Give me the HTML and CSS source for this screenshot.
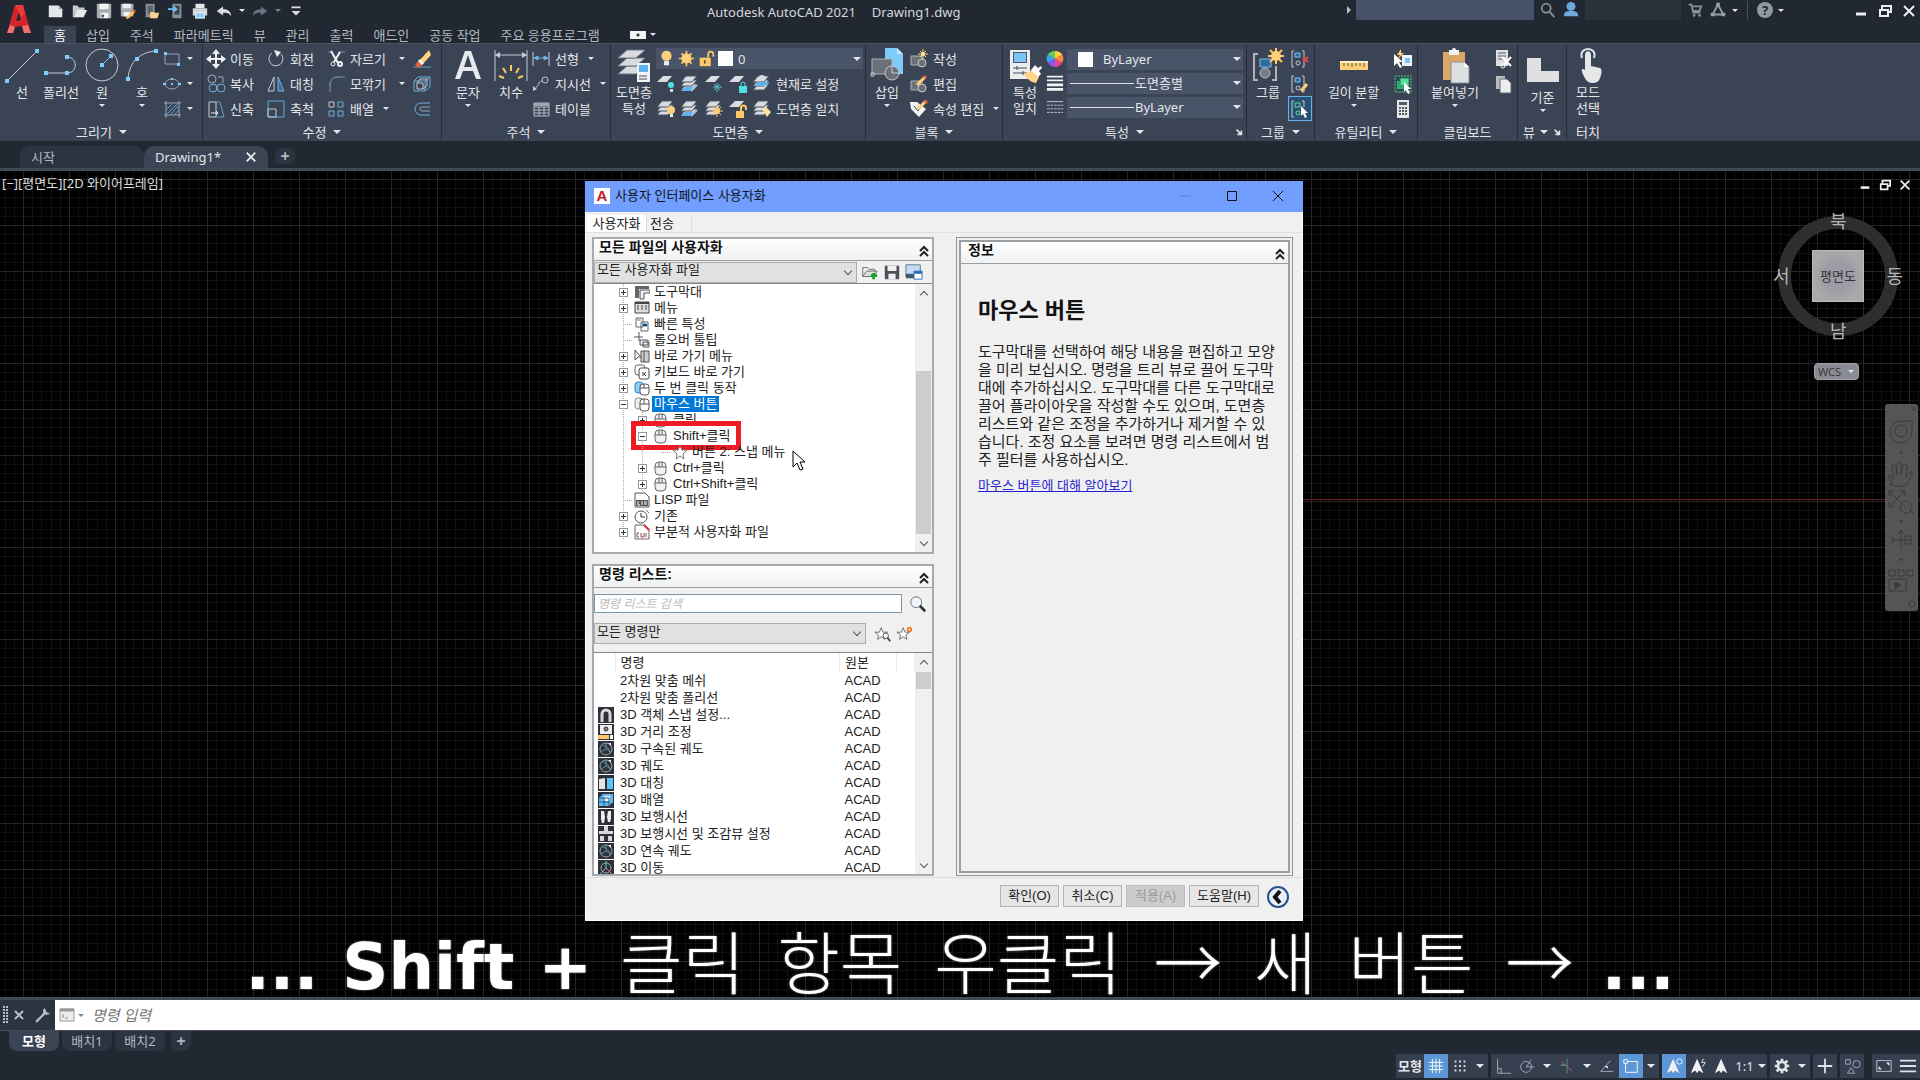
FILE: index.html
```html
<!DOCTYPE html>
<html lang="ko">
<head>
    <meta charset="UTF-8">
    <title>Autodesk AutoCAD 2021 - Drawing1.dwg</title>
    <link rel="stylesheet" href="styles.css">
</head>
<body>
<svg class="defs" aria-hidden="true">
    <!-- quick access -->
    <symbol id="q-new" viewBox="0 0 20 20"><path d="M2 4h11l4 4v9H2z" fill="#e4e6e8"/><path d="M13 4v4h4z" fill="#9aa2ac"/></symbol>
    <symbol id="q-open" viewBox="0 0 20 20"><path d="M2 4h5l2 2h6v3H6l-3 8H2z" fill="#c6cace"/><path d="M6 9h12l-4 8H3z" fill="#e8eaec"/></symbol>
    <symbol id="q-save" viewBox="0 0 20 20"><path d="M2 2h16v16H2z" fill="#a9adb2"/><path d="M5 2h10v6H5zM6 12h9v6H6z" fill="#f2f2f2"/><path d="M7 14h3v3H7z" fill="#555c66"/></symbol>
    <symbol id="q-saveas" viewBox="0 0 20 20"><path d="M2 2h14v14H2z" fill="#a9adb2"/><path d="M4 2h9v5H4zM5 11h7v5H5z" fill="#f2f2f2"/><path d="M8 17l8-8 2 2-7 7-3 1z" fill="#ffc861"/><path d="M15 10l2-2 2 2-2 2z" fill="#d65a3a"/></symbol>
    <symbol id="q-mopen" viewBox="0 0 20 20"><path d="M3 2h10v15H3z" fill="#8b9097"/><path d="M5 4h6v9H5z" fill="#5c636d"/><path d="M8 11h4l1 1h5l-2 6H8z" fill="#ffd489"/></symbol>
    <symbol id="q-msave" viewBox="0 0 20 20"><path d="M6 2h10v16H6z" fill="#8b9097"/><path d="M8 4h6v10H8z" fill="#3d4654"/><path d="M1 7h6V4l5 4-5 4V9H1z" fill="#6cc0f5"/></symbol>
    <symbol id="q-print" viewBox="0 0 20 20"><path d="M5 2h10v5H5z" fill="#e6e6e6"/><path d="M2 7h16v8H2z" fill="#d3d6d9"/><path d="M5 12h10v6H5z" fill="#8fd0fa" stroke="#f4f4f4"/></symbol>
    <symbol id="q-undo" viewBox="0 0 20 20"><path d="M2 10l7-5v3c6 0 9 3 9 8-2-4-5-4-9-4v3z" fill="#dcdfe3"/></symbol>
    <symbol id="q-redo" viewBox="0 0 20 20"><path d="M18 10l-7-5v3c-6 0-9 3-9 8 2-4 5-4 9-4v3z" fill="#6b7380"/></symbol>
    <symbol id="q-more" viewBox="0 0 20 20"><path d="M5 5h10v2H5zM5 10h10l-5 5z" fill="#dcdfe3"/></symbol>
    <symbol id="logo" viewBox="0 0 28 32"><path d="M2 30L10 2h8l8 28h-7l-2-7-7 1-2 6z" fill="#d3232b"/><path d="M10 2h8l2 8-9 9 3-10z" fill="#ee3a3d"/><path d="M2 30l3-8 5 2-2 6zM26 30l-3-8-6 1 2 7z" fill="#f0706e"/><path d="M11 18l3-9 2 8z" fill="#212832"/></symbol>
    <symbol id="t-search" viewBox="0 0 20 20"><circle cx="8" cy="8" r="5" fill="none" stroke="#8a9099" stroke-width="2"/><path d="M12 12l5 6" stroke="#8a9099" stroke-width="2"/></symbol>
    <symbol id="t-user" viewBox="0 0 20 20"><circle cx="10" cy="6" r="5" fill="#69a9dc"/><path d="M2 17c0-6 4-6 8-6s8 0 8 6z" fill="#69a9dc"/></symbol>
    <symbol id="t-cart" viewBox="0 0 20 20"><path d="M3 4h3l2 9h8M6 6h11l-2 5H8" fill="none" stroke="#8a9099" stroke-width="2"/><circle cx="9" cy="16" r="1.500" fill="#8a9099"/><circle cx="15" cy="16" r="1.500" fill="#8a9099"/></symbol>
    <symbol id="t-app" viewBox="0 0 20 20"><path d="M10 4l6 11H4z" fill="none" stroke="#9aa0a8" stroke-width="2"/><path d="M8 2h4v4H8zM2 13h4v4H2zM14 13h4v4h-4z" fill="#9aa0a8"/></symbol>
    <!-- draw -->
    <symbol id="b-line" viewBox="0 0 36 36"><path d="M3 33L33 3" stroke="#c5ccd6" fill="none"/><path d="M1 31h4v4H1zM31 1h4v4h-4z" fill="#7ecbff"/></symbol>
    <symbol id="b-pline" viewBox="0 0 36 36"><path d="M3 25h21c11 0 11-16 0-16" stroke="#c5ccd6" fill="none"/><path d="M1 23h4v4H1zM22 23h4v4h-4zM22 7h4v4h-4z" fill="#7ecbff"/></symbol>
    <symbol id="b-circle" viewBox="0 0 36 36"><circle cx="18" cy="17" r="16" stroke="#c5ccd6" fill="none"/><path d="M18 17l8-8" stroke="#7ecbff"/><path d="M16 15h4v4h-4zM25 6h4v4h-4z" fill="#7ecbff"/></symbol>
    <symbol id="b-arc" viewBox="0 0 36 36"><path d="M4 31C5 14 16 4 32 3" stroke="#c5ccd6" fill="none"/><path d="M2 29h4v4H2zM11 9h4v4h-4zM30 1h4v4h-4z" fill="#7ecbff"/></symbol>
    <symbol id="s-rect" viewBox="0 0 20 20"><path d="M3 5h14v10H3z" stroke="#9aa5b5" fill="none"/><path d="M2 3h3v3H2zM15 14h3v3h-3z" fill="#7ecbff"/></symbol>
    <symbol id="s-ellipse" viewBox="0 0 20 20"><ellipse cx="10" cy="10" rx="7" ry="5" stroke="#9aa5b5" fill="none"/><path d="M9 9h2v2H9zM9 4h2v2H9zM16 9h3v2h-3zM1 9h3v2H1z" fill="#7ecbff"/></symbol>
    <symbol id="s-hatch" viewBox="0 0 20 20"><path d="M2 4h17M2 16h17M4 2v17M17 2v17" stroke="#9aa5b5" fill="none"/><path d="M5 10l5-5M5 15L15 5M8 16l8-9M12 16l5-5" stroke="#5f9fd0"/></symbol>
    <!-- modify -->
    <symbol id="s-move" viewBox="0 0 20 20"><path d="M10 2v16M2 10h16" stroke="#eef0f3" stroke-width="2"/><path d="M10 0l4 5H6zM10 20l4-5H6zM0 10l5-4v8zM20 10l-5-4v8z" fill="#eef0f3"/></symbol>
    <symbol id="s-rotate" viewBox="0 0 20 20"><path d="M6 4a7 7 0 1 0 9 1" stroke="#c5ccd6" fill="none"/><path d="M8 1l7 2-4 5z" fill="#eef0f3"/></symbol>
    <symbol id="s-trim" viewBox="0 0 20 20"><path d="M2 3h5M12 3h7" stroke="#7f8b9b"/><path d="M5 2l7 12M14 3L8 13" stroke="#eef0f3" stroke-width="2"/><circle cx="7" cy="15" r="2" stroke="#eef0f3" fill="none"/><circle cx="14" cy="15" r="2" stroke="#eef0f3" fill="none" stroke-width="2"/></symbol>
    <symbol id="s-erase" viewBox="0 0 20 20"><path d="M1 18h18" stroke="#5f9fd0"/><path d="M6 13L17 1l2 5-9 10z" fill="#ffd27c"/><path d="M6 12l4 4-3 3-4-3z" fill="#e5643f"/><path d="M8 10l4 4-2 2-4-4z" fill="#f4f4f4"/></symbol>
    <symbol id="s-copy" viewBox="0 0 20 20"><g fill="none" stroke="#9aa5b5"><circle cx="6" cy="5" r="4"/><path d="M12 3h5v6"/></g><circle cx="7" cy="14" r="4" fill="none" stroke="#6fb0df"/><circle cx="15" cy="14" r="4" fill="none" stroke="#6fb0df"/></symbol>
    <symbol id="s-mirror" viewBox="0 0 20 20"><path d="M8 3v14H2z" fill="none" stroke="#c5ccd6"/><path d="M12 3v14h6z" fill="#3f6f99" stroke="#6fb0df"/></symbol>
    <symbol id="s-fillet" viewBox="0 0 20 20"><path d="M4 18V10M11 3h8" stroke="#8793a3"/><path d="M4 11c0-5 3-8 8-8" stroke="#6fb0df" fill="none"/></symbol>
    <symbol id="s-explode" viewBox="0 0 20 20"><path d="M2 7h11v10H2zM2 7l4-4h12l-5 4M18 3v10l-5 4" stroke="#6fb0df" fill="none"/><path d="M5 9h6v6H5zM5 9l3-4h7v7l-4 3" fill="none" stroke="#c5ccd6"/></symbol>
    <symbol id="s-stretch" viewBox="0 0 20 20"><path d="M3 3h7v15H3z" stroke="#c5ccd6" fill="none"/><path d="M10 3h4l4 15h-8" stroke="#5f9fd0" fill="none"/><path d="M5 14h7l-2-2m2 2l-2 2" stroke="#eef0f3" fill="none"/></symbol>
    <symbol id="s-scale" viewBox="0 0 20 20"><path d="M2 2h16v16H2z" stroke="#5fa8df" fill="none"/><path d="M2 10h8v8H2z" stroke="#c5ccd6" fill="none"/></symbol>
    <symbol id="s-array" viewBox="0 0 20 20"><path d="M3 3h5v5H3z" stroke="#c5ccd6" fill="none"/><path d="M12 3h5v5h-5zM3 12h5v5H3zM12 12h5v5h-5z" stroke="#6fb0df" fill="none"/></symbol>
    <symbol id="s-offset" viewBox="0 0 20 20"><path d="M18 4H9a6 6 0 0 0 0 12h9" stroke="#6fb0df" fill="none"/><path d="M18 8h-8a2 2 0 0 0 0 4h8" stroke="#9aa5b5" fill="none"/></symbol>
    <!-- annotation -->
    <symbol id="b-text" viewBox="0 0 36 36"><path d="M5 31L15 3h6l10 28h-5l-3-8H13l-3 8zM14 19h8L18 7z" fill="#e6e9ee"/></symbol>
    <symbol id="b-dim" viewBox="0 0 36 36"><path d="M2 2v31M34 2v31M2 7h32" stroke="#c5ccd6"/><path d="M2 7l5-3v6zM34 7l-5-3v6z" fill="#c5ccd6"/><path d="M18 17v6M10 20l3 5M26 20l-3 5M6 28l5 2M30 28l-5 2" stroke="#ffc861" stroke-width="2"/></symbol>
    <symbol id="s-linear" viewBox="0 0 20 20"><path d="M2 3v14M18 3v14" stroke="#c5ccd6"/><path d="M3 9h14M3 9l4-2v4zM17 9l-4-2v4z" stroke="#6fb0df" fill="#6fb0df"/></symbol>
    <symbol id="s-leader" viewBox="0 0 20 20"><circle cx="14" cy="6" r="3" stroke="#c5ccd6" fill="none"/><path d="M11 7c-4 0-3 6-8 8" stroke="#c5ccd6" fill="none"/><path d="M2 17v-5l4 3z" fill="#c5ccd6"/></symbol>
    <symbol id="s-table" viewBox="0 0 20 20"><path d="M3 4h15v13H3zM3 8h15M3 11h15M3 14h15M8 8v9M13 8v9" stroke="#b5bcc7" fill="none"/><path d="M3 4h15v3H3z" fill="#9aa5b5"/></symbol>
    <!-- layers -->
    <symbol id="b-layer" viewBox="0 0 36 36"><g fill="#d9dbde" stroke="#6e7580"><path d="M11 18h18l-9 8H2z"/><path d="M11 10h18l-9 8H2z"/><path d="M11 2h18l-9 8H2z"/></g><path d="M21 15h13v19H21z" fill="#f2f3f4"/><path d="M23 17h9v7h-9z" fill="#5bb5f2"/><path d="M23 28h8M23 31h8" stroke="#444b55"/></symbol>
    <symbol id="s-bulb" viewBox="0 0 20 20"><circle cx="10" cy="7" r="6" fill="#ffd07a"/><path d="M7 13h6v5H7z" fill="#e8eaec"/></symbol>
    <symbol id="s-sun" viewBox="0 0 20 20"><path d="M10 1v18M1 10h18M4 4l12 12M16 4L4 16" stroke="#ffc765" stroke-width="2"/><circle cx="10" cy="10" r="6" fill="#ffd07a"/></symbol>
    <symbol id="s-lock" viewBox="0 0 20 20"><path d="M2 9h13v10H2z" fill="#ffc765"/><path d="M12 9V5a3 3 0 0 1 6 0v3" stroke="#ffc765" stroke-width="2" fill="none"/><path d="M8 12v4" stroke="#4c5567" stroke-width="2"/></symbol>
    <symbol id="s-sheet" viewBox="0 0 20 20"><path d="M7 2h9l-5 6H1z" fill="#d9dbde"/></symbol>
    <symbol id="s-sheets" viewBox="0 0 20 20"><g fill="#d9dbde" stroke="#4d5665"><path d="M6 10h11l-5 6H1z"/><path d="M6 6h11l-5 6H1z"/><path d="M6 2h11l-5 6H1z"/></g></symbol>
    <symbol id="l-off" viewBox="0 0 20 20"><use href="#s-sheet"/><circle cx="15" cy="11" r="3" fill="#4fe0e6"/><path d="M14 15h3v3h-3z" fill="#d9dbde"/></symbol>
    <symbol id="l-iso" viewBox="0 0 20 20"><use href="#s-sheets"/><path d="M5 13h8l-3 4H1z" fill="#5fb2ee"/><path d="M11 17l6-6" stroke="#9fc3df" stroke-width="2"/></symbol>
    <symbol id="l-freeze" viewBox="0 0 20 20"><use href="#s-sheet"/><path d="M13 9v9M9 13h9M10 10l6 6M16 10l-6 6" stroke="#4fc0c6"/></symbol>
    <symbol id="l-lock" viewBox="0 0 20 20"><use href="#s-sheet"/><path d="M11 12h8v7h-8z" fill="#4fe0e6"/><path d="M13 12v-2a2 2 0 0 1 4 0v2" stroke="#4fe0e6" fill="none"/></symbol>
    <symbol id="l-cur" viewBox="0 0 20 20"><use href="#s-sheets"/><path d="M6 8h12l-5 4H2z" fill="#5fb2ee"/><circle cx="10" cy="4" r="3" fill="#d8dbe0"/></symbol>
    <symbol id="l-on" viewBox="0 0 20 20"><use href="#s-sheets"/><circle cx="15" cy="11" r="4" fill="#ffd07a"/><path d="M14 15h3v3h-3z" fill="#e8eaec"/></symbol>
    <symbol id="l-thaw" viewBox="0 0 20 20"><use href="#s-sheets"/><path d="M13 7v11M8 12h11M9 8l8 8M17 8l-8 8" stroke="#ffc765"/><circle cx="13" cy="12" r="3" fill="#ffd07a"/></symbol>
    <symbol id="l-unlock" viewBox="0 0 20 20"><use href="#s-sheet"/><path d="M8 12h8v7H8z" fill="#ffc765"/><path d="M13 12V9a2 2 0 0 1 5 0v2" stroke="#ffc765" fill="none" stroke-width="2"/></symbol>
    <symbol id="l-match" viewBox="0 0 20 20"><use href="#s-sheets"/><path d="M10 10l4-2 5 5-4 5z" fill="#ffe0a3"/></symbol>
    <!-- block -->
    <symbol id="b-insert" viewBox="0 0 36 36"><path d="M16 0h12l6 6v20H16z" fill="#7ccbf9"/><path d="M28 0v6h6z" fill="#c7e9fd"/><path d="M3 11h20v15H3z" fill="#6b7078" stroke="#aeb3ba"/><circle cx="23" cy="25" r="7" fill="#6b7078" stroke="#c5cad0"/><path d="M23 18v7h7M2 25h3v3H2z" stroke="#c5cad0" fill="none"/></symbol>
    <symbol id="s-blk" viewBox="0 0 20 20"><path d="M2 7h11v9H2z" fill="#6b7078" stroke="#aeb3ba"/><circle cx="13" cy="14" r="4" fill="#6b7078" stroke="#c5cad0"/></symbol>
    <symbol id="k-new" viewBox="0 0 20 20"><use href="#s-blk"/><path d="M14 0v10M9 5h10M11 2l6 6M17 2l-6 6" stroke="#ffd07a"/><circle cx="14" cy="5" r="2" fill="#ffe3a8"/></symbol>
    <symbol id="k-edit" viewBox="0 0 20 20"><use href="#s-blk"/><path d="M8 11l8-8" stroke="#ffd07a" stroke-width="3"/><path d="M15 4l2-2" stroke="#e5643f" stroke-width="3"/></symbol>
    <symbol id="k-attr" viewBox="0 0 20 20"><path d="M1 3h7l9 7-7 8-8-8z" fill="#f2f3f4"/><path d="M5 7l4 5 3-4" stroke="#444b55" fill="none"/><path d="M9 10l8-8" stroke="#ffd07a" stroke-width="3"/><path d="M16 4l2-2" stroke="#e5643f" stroke-width="3"/></symbol>
    <!-- properties -->
    <symbol id="b-match" viewBox="0 0 36 36"><path d="M3 2h20v29H3z" fill="#eceded"/><path d="M6 4h14v11H6z" fill="#4c5567"/><path d="M7 5h12v9H7z" fill="#7cc4f5"/><path d="M6 20h14M6 25h14M10 18v4M16 23v4" stroke="#444b55"/><path d="M17 26l8-4 7 7-3 6c-4 0-9-4-12-9z" fill="#ffd489"/><path d="M24 22l4-5 3 3 3-2 1 2-3 3 2 3-3 3z" fill="#fff"/></symbol>
    <symbol id="s-wheel" viewBox="0 0 20 20"><path d="M10 10V1a9 9 0 0 1 8 4z" fill="#ffd23c"/><path d="M10 10l8-5a9 9 0 0 1 0 9z" fill="#ff8a3c"/><path d="M10 10l8 4a9 9 0 0 1-8 5z" fill="#e8478f"/><path d="M10 10v9a9 9 0 0 1-8-5z" fill="#8a56e8"/><path d="M10 10l-8 4a9 9 0 0 1 0-9z" fill="#39a5ef"/><path d="M10 10L2 5a9 9 0 0 1 8-4z" fill="#5fcf5a"/></symbol>
    <symbol id="s-weight" viewBox="0 0 20 20"><path d="M1 3h18M1 7h18" stroke="#f2f3f4" stroke-width="2"/><path d="M1 12h18M1 17h18" stroke="#f2f3f4" stroke-width="3"/></symbol>
    <symbol id="s-ltype" viewBox="0 0 20 20"><path d="M1 4h18" stroke="#c5ccd6"/><path d="M1 8h18M1 12h18M1 16h18" stroke="#c5ccd6" stroke-dasharray="3 1"/></symbol>
    <!-- group / util / clip / view -->
    <symbol id="b-group" viewBox="0 0 36 36"><path d="M8 6H4v26h4M22 32h4V18" stroke="#aeb3ba" fill="none" stroke-width="2"/><path d="M10 11h11v8H10z" fill="#2f6b9c" stroke="#7cc4f5"/><circle cx="15" cy="25" r="5" fill="#777d86" stroke="#b5bac1"/><path d="M26 0v16M18 8h16M20 2l12 12M32 2L20 14" stroke="#ffc765" stroke-width="2"/><circle cx="26" cy="8" r="5" fill="#ffd07a"/></symbol>
    <symbol id="s-grp" viewBox="0 0 20 20"><path d="M4 2H2v16h2M12 2h2v16h-2" stroke="#c5ccd6" fill="none"/><path d="M5 4h5v4H5z" fill="#2f6b9c" stroke="#7cc4f5"/><circle cx="8" cy="14" r="2" fill="none" stroke="#c5ccd6"/></symbol>
    <symbol id="g-un" viewBox="0 0 20 20"><use href="#s-grp"/><path d="M13 8l5 5M18 8l-5 5" stroke="#e04b4b" stroke-width="2"/></symbol>
    <symbol id="g-edit" viewBox="0 0 20 20"><use href="#s-grp"/><path d="M11 17l6-7" stroke="#ffd07a" stroke-width="3"/></symbol>
    <symbol id="g-sel" viewBox="0 0 20 20"><path d="M4 2H2v16h2M12 2h2v6" stroke="#c5ccd6" fill="none"/><path d="M5 4h5v4H5z" fill="none" stroke="#5fe08f"/><circle cx="8" cy="14" r="2" fill="none" stroke="#5fe08f"/><path d="M11 7v10l2-2 2 4 2-1-2-4h3z" fill="#fff"/></symbol>
    <symbol id="b-measure" viewBox="0 0 36 36"><path d="M4 14h28v8H4z" fill="#ffd07a"/><path d="M4 14h28" stroke="#fff0c9" stroke-width="2"/><path d="M8 15v3M12 15v3M16 15v4M20 15v3M24 15v3M28 15v4" stroke="#5d5138"/></symbol>
    <symbol id="u-quick" viewBox="0 0 20 20"><path d="M8 0L4 6h3l-3 5 7-7H8z" fill="#ffd07a"/><path d="M9 6h10v11H9z" fill="#f2f3f4"/><path d="M12 9h5v5h-5z" fill="#7cc4f5"/><path d="M1 5v12l3-3 3 5 2-1-3-5h4z" fill="#fff"/></symbol>
    <symbol id="u-all" viewBox="0 0 20 20"><path d="M2 2h16v16H2z" fill="none" stroke="#44c985" stroke-dasharray="2 1"/><path d="M4 7h8v8H4z" fill="#2bb673"/><path d="M7 4h9v8H7z" fill="#53e09a" stroke="#1f7d50"/><path d="M11 8v10l2-2 2 4 2-1-2-4h3z" fill="#fff"/></symbol>
    <symbol id="u-calc" viewBox="0 0 20 20"><path d="M4 1h12v18H4z" fill="#e4e6e8"/><path d="M6 3h8v3H6z" fill="#555c66"/><path d="M6 9h8M6 12h8M6 15h8" stroke="#555c66" stroke-width="2" stroke-dasharray="2 1"/></symbol>
    <symbol id="b-paste" viewBox="0 0 36 36"><path d="M6 4h22v28H6z" fill="#dba766"/><path d="M12 2h3a2 2 0 0 1 4 0h3v5H12z" fill="#f2f3f4"/><path d="M14 14h13l5 5v16H14z" fill="#dedfe1" stroke="#8b8f95"/><path d="M27 14v5h5z" fill="#fff"/></symbol>
    <symbol id="c-cut" viewBox="0 0 20 20"><path d="M3 1h12v16H3z" fill="#dedfe1"/><path d="M5 4h8M5 7h8M5 10h5" stroke="#555c66"/><path d="M9 8l9 9M18 8l-7 8" stroke="#fff" stroke-width="2"/><circle cx="10" cy="17" r="2" fill="none" stroke="#fff"/></symbol>
    <symbol id="c-copy" viewBox="0 0 20 20"><path d="M3 2h9v13H3z" fill="#b9bcc1"/><path d="M7 5h7l4 4v10H7z" fill="#eceded" stroke="#60666f"/></symbol>
    <symbol id="b-base" viewBox="0 0 36 36"><path d="M2 10h14v13h18v11H2z" fill="#dfe0e1"/></symbol>
    <symbol id="b-touch" viewBox="0 0 36 36"><path d="M15 7c0-5 6-5 6 0v11l9 2c2 1 2 5 0 10-1 4-4 5-8 5-5 0-7-4-10-11-1-3 1-4 3-2z" fill="#e6e7e8"/><path d="M12 10c-4-12 16-12 12 0" stroke="#dfe2e6" fill="none" stroke-width="2"/></symbol>
    <symbol id="s-corner" viewBox="0 0 10 10"><path d="M2 2l5 5M8 3v5H3" stroke="#dfe2e6" fill="none" stroke-width="2"/></symbol>
    <!-- dialog -->
    <symbol id="d-chev" viewBox="0 0 12 12"><path d="M2 6l4-4 4 4M2 11l4-4 4 4" fill="none" stroke="#222" stroke-width="2"/></symbol>
    <symbol id="d-load" viewBox="0 0 20 20"><path d="M2 15V5h5l2 2h6v2" fill="none" stroke="#666"/><path d="M2 15L6 9h12l-4 6z" fill="#ddd" stroke="#666"/><path d="M14 11v7M11 14h7" stroke="#17a22a" stroke-width="3"/></symbol>
    <symbol id="d-save" viewBox="0 0 20 20"><path d="M2 3h16v15H2z" fill="#4c5058"/><path d="M5 3h10v6H5zM6 12h8v6H6z" fill="#f0f0f0"/></symbol>
    <symbol id="d-prev" viewBox="0 0 20 20"><path d="M1 2h16v13H1z" fill="#c4dcf2" stroke="#55708c"/><path d="M1 12h9v5H1z" fill="#3e5770"/><path d="M10 9h9v9h-9z" fill="#fff" stroke="#2a6db5"/><path d="M10 9h9v3h-9z" fill="#2a6db5"/></symbol>
    <symbol id="d-find" viewBox="0 0 20 20"><circle cx="8" cy="8" r="6" fill="#eef6fb" stroke="#666"/><path d="M12 12l6 6" stroke="#333" stroke-width="3"/></symbol>
    <symbol id="d-star" viewBox="0 0 20 20"><path d="M8 3l2 5h5l-4 3 1 5-4-3-4 3 1-5-4-3h5z" fill="#fff" stroke="#666"/></symbol>
    <symbol id="d-starf" viewBox="0 0 20 20"><use href="#d-star"/><circle cx="13" cy="12" r="3" fill="#fff" stroke="#444"/><path d="M15 14l3 4" stroke="#444" stroke-width="2"/></symbol>
    <symbol id="d-starn" viewBox="0 0 20 20"><use href="#d-star"/><circle cx="15" cy="5" r="2" fill="#fff" stroke="#f07a22" stroke-width="2"/></symbol>
    <!-- tree -->
    <symbol id="r-bar" viewBox="0 0 16 16"><path d="M1 2h14v3H5v9H1z" fill="#666"/><path d="M6 6h10v3h-6v6H6z" fill="#eee" stroke="#555"/></symbol>
    <symbol id="r-menu" viewBox="0 0 16 16"><path d="M1 2h14v11H1z" fill="#ddd" stroke="#444"/><path d="M1 3h14" stroke="#444" stroke-width="2"/><path d="M4 5v5M8 5v5M12 5v5" stroke="#444"/></symbol>
    <symbol id="r-quick" viewBox="0 0 16 16"><path d="M2 2h7v9H2zM7 6h7v9H7z" fill="#fff" stroke="#666"/><path d="M3 4h4M9 8h4v2H9z" stroke="#2f7fd0"/></symbol>
    <symbol id="r-roll" viewBox="0 0 16 16"><path d="M5 0v9M0 5h9" stroke="#555"/><path d="M6 8h8v5H6zM9 10h6v5H9z" fill="#eee" stroke="#555"/></symbol>
    <symbol id="r-short" viewBox="0 0 16 16"><path d="M1 2v10l3-3h3z" fill="#fff" stroke="#555"/><path d="M7 3h8v11H7z" fill="#ccc" stroke="#555"/><path d="M10 3v11" stroke="#555"/></symbol>
    <symbol id="r-key" viewBox="0 0 16 16"><rect x="1" y="1" width="10" height="10" rx="3" fill="#fff" stroke="#666"/><rect x="5" y="4" width="10" height="11" rx="2" fill="#fff" stroke="#444"/><path d="M9 8v4M12 8l-2 2 2 2" stroke="#333" fill="none"/></symbol>
    <symbol id="r-dbl" viewBox="0 0 16 16"><rect x="1" y="2" width="8" height="11" rx="3" fill="#8fd0fa" stroke="#2f7fd0"/><rect x="6" y="4" width="9" height="11" rx="3" fill="#fff" stroke="#555"/><path d="M6 8h9M10 4v4" stroke="#555"/></symbol>
    <symbol id="r-mice" viewBox="0 0 16 16"><rect x="1" y="2" width="8" height="11" rx="3" fill="#eee" stroke="#888"/><rect x="6" y="3" width="9" height="12" rx="3" fill="#fff" stroke="#555"/><path d="M6 8h9M10 3v5" stroke="#555"/></symbol>
    <symbol id="r-mouse" viewBox="0 0 16 16"><rect x="2" y="2" width="11" height="13" rx="4" fill="#f2f2f2" stroke="#666"/><path d="M2 7h11M6 2v5M9 2v5" stroke="#666"/></symbol>
    <symbol id="r-star" viewBox="0 0 16 16"><path d="M8 2l2 4h5l-4 4 1 5-4-3-4 3 1-5-4-4h5z" fill="#fff" stroke="#777"/></symbol>
    <symbol id="r-file" viewBox="0 0 16 16"><path d="M1 1h10l4 4v10H1z" fill="#fff" stroke="#555"/><path d="M2 8h12v6H2z" fill="#555"/><path d="M4 9v4h2M8 9v4M10 10h3M10 12h3" stroke="#fff" fill="none"/></symbol>
    <symbol id="r-clock" viewBox="0 0 16 16"><circle cx="7" cy="9" r="6" fill="#fff" stroke="#555"/><path d="M7 5v4h4" stroke="#333" fill="none"/><path d="M12 2l3 3" stroke="#777"/></symbol>
    <symbol id="r-cui" viewBox="0 0 16 16"><path d="M1 1h10l4 4v10H1z" fill="#fff" stroke="#666"/><path d="M10 1l5 5" stroke="#e03040" stroke-width="2"/><path d="M5 9H3v4h2M7 9v4h3V9M12 9v4" stroke="#8c4a4a" fill="none"/></symbol>
    <!-- command list -->
    <symbol id="m-snap" viewBox="0 0 16 16"><path d="M4 15V7a4 4 0 0 1 8 0v8" stroke="#d8d8d8" stroke-width="3" fill="none"/></symbol>
    <symbol id="m-dist" viewBox="0 0 16 16"><path d="M2 1h12v9H2z" fill="#eee"/><circle cx="8" cy="5" r="2" fill="#888" stroke="#333"/><path d="M0 11h11v4H0z" fill="#ffc765"/><path d="M12 11h3v4h-3z" fill="#fff"/></symbol>
    <symbol id="m-orbit" viewBox="0 0 16 16"><circle cx="8" cy="8" r="6" stroke="#9aa5b5" fill="none"/><path d="M8 2v6l5 3M3 11l5-3M4 4c4 0 8 4 8 9" stroke="#5c8f9f" fill="none"/><path d="M10 2h3v3z" fill="#eee"/></symbol>
    <symbol id="m-mirror" viewBox="0 0 16 16"><path d="M1 4l6-1v11H1z" fill="#e5e5e5"/><path d="M9 3h6v11H9z" fill="#5fc3f5"/></symbol>
    <symbol id="m-array" viewBox="0 0 16 16"><path d="M1 6l4-4h10v8l-4 4H1z" fill="#62b8ee"/><path d="M6 4h6v5H6z" fill="#eee"/><path d="M1 10h10M6 6v8M11 6v8M1 6h10" stroke="#1e5c8a"/></symbol>
    <symbol id="m-walk" viewBox="0 0 16 16"><path d="M3 2h3l1 6-1 6H4L3 10zM10 2h3v8l-1 3h-2L9 8z" fill="#eee"/></symbol>
    <symbol id="m-wset" viewBox="0 0 16 16"><path d="M6 0h4v5h5v3H1V5h5zM2 10h4v5H2zM10 10h4v5h-4z" fill="#d8d8d8"/></symbol>
    <symbol id="m-move" viewBox="0 0 16 16"><circle cx="8" cy="8" r="5" stroke="#9aa5b5" fill="none"/><path d="M8 1v7" stroke="#4fe0a0"/><path d="M8 8l-6 6" stroke="#6fb0ff"/><path d="M8 8l6 6" stroke="#ff6a6a"/></symbol>
    <!-- status -->
    <symbol id="z-grid" viewBox="0 0 20 20"><path d="M6 2v16M10 2v16M14 2v16M2 6h16M2 10h16M2 14h16" stroke="#fff"/></symbol>
    <symbol id="z-dots" viewBox="0 0 20 20"><path d="M4 5h13M4 10h13M4 15h13" stroke="#dfe2e6" stroke-width="2" stroke-dasharray="2 3"/></symbol>
    <symbol id="z-ortho" viewBox="0 0 20 20"><path d="M4 2v16h15M4 13h4v5" stroke="#aab1bc" fill="none"/></symbol>
    <symbol id="z-polar" viewBox="0 0 20 20"><circle cx="9" cy="11" r="6" stroke="#aab1bc" fill="none"/><path d="M9 11h9M9 11l6-8" stroke="#aab1bc"/></symbol>
    <symbol id="z-iso" viewBox="0 0 20 20"><path d="M10 2v16" stroke="#4fa080"/><path d="M4 5l12 11" stroke="#b0636f"/><path d="M3 9h5" stroke="#aab1bc"/></symbol>
    <symbol id="z-track" viewBox="0 0 20 20"><path d="M17 16H3L14 4" stroke="#aab1bc" fill="none"/><path d="M7 10h4v3z" fill="#dfe2e6"/></symbol>
    <symbol id="z-osnap" viewBox="0 0 20 20"><path d="M4 5h13v12H4z" stroke="#fff" fill="none"/><path d="M2 3h4v4H2z" fill="#5b96d6" stroke="#fff"/></symbol>
    <symbol id="z-anno" viewBox="0 0 20 20"><path d="M9 2l7 16-5-3-2 3-2-3-5 3z" fill="#eef0f3"/></symbol>
    <symbol id="z-anno1" viewBox="0 0 20 20"><use href="#z-anno"/><circle cx="16" cy="5" r="3" fill="none" stroke="#fff"/></symbol>
    <symbol id="z-anno2" viewBox="0 0 20 20"><use href="#z-anno"/><path d="M16 2l-2 4h4l-3 5" stroke="#eef0f3" fill="none"/></symbol>
    <symbol id="z-gear" viewBox="0 0 20 20"><path d="M10 2v16M2 10h16M4 4l12 12M16 4L4 16" stroke="#dfe2e6" stroke-width="3"/><circle cx="10" cy="10" r="6" fill="#dfe2e6"/><circle cx="10" cy="10" r="3" fill="#3a4353"/></symbol>
    <symbol id="z-plus" viewBox="0 0 20 20"><path d="M10 2v16M2 10h16" stroke="#dfe2e6" stroke-width="2"/></symbol>
    <symbol id="z-shapes" viewBox="0 0 20 20"><path d="M3 3h5v5H3zM9 12l4 6H5z" stroke="#aab1bc" fill="none"/><circle cx="15" cy="8" r="4" stroke="#aab1bc" fill="none"/></symbol>
    <symbol id="z-full" viewBox="0 0 20 20"><path d="M2 4h16v12H2z" stroke="#c5ccd6" fill="none"/><path d="M12 6h4v4zM4 10v4h4z" fill="#dfe2e6"/></symbol>
    <symbol id="z-menu" viewBox="0 0 20 20"><path d="M1 4h18M1 10h18M1 16h18" stroke="#dfe2e6" stroke-width="2"/></symbol>
    <symbol id="w-restore" viewBox="0 0 14 14"><path d="M4 5V2h9v6h-3M2 6h8v6H2z" fill="none" stroke="#eee" stroke-width="2"/></symbol>
    <symbol id="w-close" viewBox="0 0 14 14"><path d="M2 2l10 10M12 2L2 12" stroke="#eee" stroke-width="2"/></symbol>
    <symbol id="w-min" viewBox="0 0 14 14"><path d="M2 10h10" stroke="#eee" stroke-width="3"/></symbol>
</svg>

<header class="titlebar">
    <svg class="logo"><use href="#logo"/></svg>
    <div class="head-main">
        <div class="title-row">
            <div class="quick">
                <button><svg><use href="#q-new"/></svg></button>
                <button><svg><use href="#q-open"/></svg></button>
                <button><svg><use href="#q-save"/></svg></button>
                <button><svg><use href="#q-saveas"/></svg></button>
                <button><svg><use href="#q-mopen"/></svg></button>
                <button><svg><use href="#q-msave"/></svg></button>
                <button><svg><use href="#q-print"/></svg></button>
                <button><svg><use href="#q-undo"/></svg></button>
                <button class="narrow"><i class="caret"></i></button>
                <button><svg><use href="#q-redo"/></svg></button>
                <button class="narrow"><i class="caret dim"></i></button>
                <button><svg><use href="#q-more"/></svg></button>
            </div>
            <div class="app-title"><span>Autodesk AutoCAD 2021</span><span>Drawing1.dwg</span></div>
            <div class="account">
                <i class="tri-right"></i>
                <input class="help-search" type="text" aria-label="검색">
                <button><svg><use href="#t-search"/></svg></button>
                <button><svg><use href="#t-user"/></svg></button>
                <span class="user-name"></span>
                <button><svg><use href="#t-cart"/></svg></button>
                <button><svg><use href="#t-app"/></svg></button>
                <i class="caret"></i>
                <i class="sep"></i>
                <button class="help">?</button>
                <i class="caret"></i>
            </div>
            <div class="win-btns">
                <button><svg><use href="#w-min"/></svg></button>
                <button><svg><use href="#w-restore"/></svg></button>
                <button><svg><use href="#w-close"/></svg></button>
            </div>
        </div>
        <nav class="ribbon-tabs">
            <button class="select">홈</button>
            <button>삽입</button>
            <button>주석</button>
            <button>파라메트릭</button>
            <button>뷰</button>
            <button>관리</button>
            <button>출력</button>
            <button>애드인</button>
            <button>공동 작업</button>
            <button>주요 응용프로그램</button>
            <i class="pill"></i><i class="caret"></i>
        </nav>
    </div>
</header>

<div class="ribbon">
    <section class="panel p-draw">
        <div class="panel-body">
            <button class="big w40"><svg><use href="#b-line"/></svg>선</button>
            <button class="big w38"><svg><use href="#b-pline"/></svg>폴리선</button>
            <button class="big w44"><svg><use href="#b-circle"/></svg>원<i class="caret"></i></button>
            <button class="big w36"><svg><use href="#b-arc"/></svg>호<i class="caret"></i></button>
            <div class="col">
                <button class="tool"><svg><use href="#s-rect"/></svg><i class="caret"></i></button>
                <button class="tool"><svg><use href="#s-ellipse"/></svg><i class="caret"></i></button>
                <button class="tool"><svg><use href="#s-hatch"/></svg><i class="caret"></i></button>
            </div>
        </div>
        <h2>그리기<i class="caret lg"></i></h2>
    </section>
    <section class="panel p-modify">
        <div class="panel-body grid">
            <button class="tool"><svg><use href="#s-move"/></svg>이동</button>
            <button class="tool"><svg><use href="#s-rotate"/></svg>회전</button>
            <button class="tool spread"><svg><use href="#s-trim"/></svg>자르기<i class="caret"></i></button>
            <button class="tool"><svg><use href="#s-erase"/></svg></button>
            <button class="tool"><svg><use href="#s-copy"/></svg>복사</button>
            <button class="tool"><svg><use href="#s-mirror"/></svg>대칭</button>
            <button class="tool spread"><svg><use href="#s-fillet"/></svg>모깎기<i class="caret"></i></button>
            <button class="tool"><svg><use href="#s-explode"/></svg></button>
            <button class="tool"><svg><use href="#s-stretch"/></svg>신축</button>
            <button class="tool"><svg><use href="#s-scale"/></svg>축척</button>
            <button class="tool"><svg><use href="#s-array"/></svg>배열<i class="caret"></i></button>
            <button class="tool"><svg><use href="#s-offset"/></svg></button>
        </div>
        <h2>수정<i class="caret lg"></i></h2>
    </section>
    <section class="panel p-note">
        <div class="panel-body">
            <button class="big w50"><svg><use href="#b-text"/></svg>문자<i class="caret"></i></button>
            <button class="big w36"><svg><use href="#b-dim"/></svg>치수</button>
            <div class="col">
                <button class="tool"><svg><use href="#s-linear"/></svg>선형<i class="caret"></i></button>
                <button class="tool"><svg><use href="#s-leader"/></svg>지시선<i class="caret"></i></button>
                <button class="tool"><svg><use href="#s-table"/></svg>테이블</button>
            </div>
        </div>
        <h2>주석<i class="caret lg"></i></h2>
    </section>
    <section class="panel p-layer">
        <div class="panel-body">
            <button class="big w44"><svg><use href="#b-layer"/></svg>도면층<br>특성</button>
            <div class="col grow">
                <label class="combo layer-combo">
                    <svg><use href="#s-bulb"/></svg><svg><use href="#s-sun"/></svg><svg><use href="#s-lock"/></svg><i class="swatch"></i>
                    <select aria-label="도면층"><option>0</option></select><i class="caret lg"></i>
                </label>
                <div class="row">
                    <button class="tool"><svg><use href="#l-off"/></svg></button>
                    <button class="tool"><svg><use href="#l-iso"/></svg></button>
                    <button class="tool"><svg><use href="#l-freeze"/></svg></button>
                    <button class="tool"><svg><use href="#l-lock"/></svg></button>
                    <button class="tool"><svg><use href="#l-cur"/></svg>현재로 설정</button>
                </div>
                <div class="row">
                    <button class="tool"><svg><use href="#l-on"/></svg></button>
                    <button class="tool"><svg><use href="#l-iso"/></svg></button>
                    <button class="tool"><svg><use href="#l-thaw"/></svg></button>
                    <button class="tool"><svg><use href="#l-unlock"/></svg></button>
                    <button class="tool"><svg><use href="#l-match"/></svg>도면층 일치</button>
                </div>
            </div>
        </div>
        <h2>도면층<i class="caret lg"></i></h2>
    </section>
    <section class="panel p-block">
        <div class="panel-body">
            <button class="big w40"><svg><use href="#b-insert"/></svg>삽입<i class="caret"></i></button>
            <div class="col">
                <button class="tool"><svg><use href="#k-new"/></svg>작성</button>
                <button class="tool"><svg><use href="#k-edit"/></svg>편집</button>
                <button class="tool"><svg><use href="#k-attr"/></svg>속성 편집<i class="caret"></i></button>
            </div>
        </div>
        <h2>블록<i class="caret lg"></i></h2>
    </section>
    <section class="panel p-prop">
        <div class="panel-body">
            <button class="big w38"><svg><use href="#b-match"/></svg>특성<br>일치</button>
            <div class="col grow">
                <label class="prop-row"><svg><use href="#s-wheel"/></svg><span class="combo"><i class="swatch"></i><select><option>ByLayer</option></select><i class="caret lg"></i></span></label>
                <label class="prop-row"><svg><use href="#s-weight"/></svg><span class="combo"><i class="line"></i><select><option>도면층별</option></select><i class="caret lg"></i></span></label>
                <label class="prop-row"><svg><use href="#s-ltype"/></svg><span class="combo"><i class="line"></i><select><option>ByLayer</option></select><i class="caret lg"></i></span></label>
            </div>
        </div>
        <h2>특성<i class="caret lg"></i><svg class="corner"><use href="#s-corner"/></svg></h2>
    </section>
    <section class="panel p-group">
        <div class="panel-body">
            <button class="big w40"><svg><use href="#b-group"/></svg>그룹</button>
            <div class="col">
                <button class="tool"><svg><use href="#g-un"/></svg></button>
                <button class="tool"><svg><use href="#g-edit"/></svg></button>
                <button class="tool on"><svg><use href="#g-sel"/></svg></button>
            </div>
        </div>
        <h2>그룹<i class="caret lg"></i></h2>
    </section>
    <section class="panel p-util">
        <div class="panel-body">
            <button class="big w76"><svg><use href="#b-measure"/></svg>길이 분할<i class="caret"></i></button>
            <div class="col">
                <button class="tool"><svg><use href="#u-quick"/></svg></button>
                <button class="tool"><svg><use href="#u-all"/></svg></button>
                <button class="tool"><svg><use href="#u-calc"/></svg></button>
            </div>
        </div>
        <h2>유틸리티<i class="caret lg"></i></h2>
    </section>
    <section class="panel p-clip">
        <div class="panel-body">
            <button class="big w76"><svg><use href="#b-paste"/></svg>붙여넣기<i class="caret"></i></button>
            <div class="col">
                <button class="tool"><svg><use href="#c-cut"/></svg></button>
                <button class="tool"><svg><use href="#c-copy"/></svg></button>
            </div>
        </div>
        <h2>클립보드</h2>
    </section>
    <section class="panel p-view">
        <div class="panel-body">
            <button class="big w50 low"><svg><use href="#b-base"/></svg>기준<i class="caret"></i></button>
        </div>
        <h2>뷰<i class="caret lg"></i><svg class="corner"><use href="#s-corner"/></svg></h2>
    </section>
    <section class="panel p-touch">
        <div class="panel-body">
            <button class="big w40"><svg><use href="#b-touch"/></svg>모드<br>선택</button>
        </div>
        <h2>터치</h2>
    </section>
</div>

<nav class="file-tabs">
    <button class="file-tab">시작</button>
    <button class="file-tab select">Drawing1*<svg><use href="#w-close"/></svg></button>
    <button class="add">+</button>
</nav>

<main class="canvas">
    <div class="axis-x"></div>
    <div class="view-label">[−][평면도][2D 와이어프레임]</div>
    <div class="view-btns">
        <svg><use href="#w-min"/></svg><svg><use href="#w-restore"/></svg><svg><use href="#w-close"/></svg>
    </div>
    <div class="viewcube">
        <span class="n">북</span><span class="w">서</span><span class="e">동</span><span class="s">남</span>
        <button class="cube">평면도</button>
    </div>
    <button class="wcs">WCS<i class="caret"></i></button>
    <div class="navbar">
        <svg viewBox="0 0 32 206" fill="none" stroke="#3b3b3b">
            <path d="M27 3l4 4m0-4l-4 4"/>
            <path d="M16 17h11v11a11 11 0 1 1-11-11z"/><circle cx="16" cy="27" r="6"/>
            <path d="M8 80c-5-7-6-9-3-9l4 4-2-12c0-3 3-3 4 0l1 8V61c0-3 4-3 4 0v10l2-9c1-3 4-2 4 0l-1 11 3-4c2-2 4-1 3 1-2 4-2 10-9 12-5 1-9 0-13-2z"/>
            <path d="M4 87l16 16M20 87L4 103M4 92v-5h5M15 87h5v5M4 98v5h5"/><circle cx="21" cy="103" r="6"/><path d="M25 107l4 3"/>
            <path d="M16 126v20M6 136h20M16 126l-3 4m3-4l3 4M6 140l4-4-4-3M20 132h6v8h-6z"/>
            <path d="M4 166h6v6H4zM13 166h6v6h-6zM22 166h6v6h-6zM4 175h17v12H4z"/><path d="M10 178l6 3-6 4z" fill="#3b3b3b"/>
            <path d="M14 48h4l-2 2zM14 117h4l-2 2zM14 155h4l-2 2z"/><circle cx="27" cy="200" r="3"/>
        </svg>
    </div>

    <div class="dialog" role="dialog" aria-label="사용자 인터페이스 사용자화">
        <div class="dlg-title">
            <i class="dlg-logo">A</i>
            <span>사용자 인터페이스 사용자화</span>
            <button><svg viewBox="0 0 14 14"><path d="M2 7h10" stroke="#5878b8"/></svg></button>
            <button><svg viewBox="0 0 14 14"><path d="M2.500 2.500h9v9h-9z" stroke="#111" fill="none"/></svg></button>
            <button><svg viewBox="0 0 14 14"><path d="M2 2l10 10M12 2L2 12" stroke="#111"/></svg></button>
        </div>
        <div class="dlg-tabs"><button class="select">사용자화</button><button>전송</button></div>
        <div class="dlg-body">
            <div class="left">
                <section class="box files">
                    <h3>모든 파일의 사용자화<svg><use href="#d-chev"/></svg></h3>
                    <div class="bar">
                        <label class="drop"><select aria-label="사용자화 파일"><option>모든 사용자화 파일</option></select><i class="vee"></i></label>
                        <svg><use href="#d-load"/></svg><svg><use href="#d-save"/></svg><svg><use href="#d-prev"/></svg>
                    </div>
                    <div class="scroller">
                        <ul class="tree">
                            <li><i class="v"><b class="plus"></b></i><svg><use href="#r-bar"/></svg><span>도구막대</span></li>
                            <li><i class="v"><b class="plus"></b></i><svg><use href="#r-menu"/></svg><span>메뉴</span></li>
                            <li><i class="v h"></i><svg><use href="#r-quick"/></svg><span>빠른 특성</span></li>
                            <li><i class="v h"></i><svg><use href="#r-roll"/></svg><span>롤오버 툴팁</span></li>
                            <li><i class="v"><b class="plus"></b></i><svg><use href="#r-short"/></svg><span>바로 가기 메뉴</span></li>
                            <li><i class="v"><b class="plus"></b></i><svg><use href="#r-key"/></svg><span>키보드 바로 가기</span></li>
                            <li><i class="v"><b class="plus"></b></i><svg><use href="#r-dbl"/></svg><span>두 번 클릭 동작</span></li>
                            <li class="select"><i class="v"><b></b></i><svg><use href="#r-mice"/></svg><span>마우스 버튼</span></li>
                            <li><i class="v"></i><i class="v"><b class="plus"></b></i><svg><use href="#r-mouse"/></svg><span>클릭</span></li>
                            <li><i class="v"></i><i class="v"><b></b></i><svg><use href="#r-mouse"/></svg><span>Shift+클릭</span><em class="mark"></em></li>
                            <li><i class="v"></i><i class="v"></i><i class="h"></i><svg><use href="#r-star"/></svg><span>버튼 2: 스냅 메뉴</span></li>
                            <li><i class="v"></i><i class="v"><b class="plus"></b></i><svg><use href="#r-mouse"/></svg><span>Ctrl+클릭</span></li>
                            <li><i class="v"></i><i class="v"><b class="plus"></b></i><svg><use href="#r-mouse"/></svg><span>Ctrl+Shift+클릭</span></li>
                            <li><i class="v h"></i><svg><use href="#r-file"/></svg><span>LISP 파일</span></li>
                            <li><i class="v"><b class="plus"></b></i><svg><use href="#r-clock"/></svg><span>기존</span></li>
                            <li><i class="v"><b class="plus"></b></i><svg><use href="#r-cui"/></svg><span>부분적 사용자화 파일</span></li>
                        </ul>
                        <div class="sbar"><i class="vee up"></i><i class="thumb tall"></i><i class="vee"></i></div>
                    </div>
                </section>
                <section class="box cmds">
                    <h3>명령 리스트:<svg><use href="#d-chev"/></svg></h3>
                    <div class="find"><input type="text" placeholder="명령 리스트 검색" aria-label="명령 리스트 검색"><svg><use href="#d-find"/></svg></div>
                    <div class="filter">
                        <label class="drop"><select aria-label="명령 범주"><option>모든 명령만</option></select><i class="vee"></i></label>
                        <svg><use href="#d-starf"/></svg><svg><use href="#d-starn"/></svg>
                    </div>
                    <div class="scroller">
                        <table>
                            <thead><tr><th></th><th>명령</th><th>원본</th><th></th></tr></thead>
                            <tbody>
                            <tr><td></td><td>2차원 맞춤 메쉬</td><td>ACAD</td></tr>
                            <tr><td></td><td>2차원 맞춤 폴리선</td><td>ACAD</td></tr>
                            <tr><td><svg><use href="#m-snap"/></svg></td><td>3D 객체 스냅 설정...</td><td>ACAD</td></tr>
                            <tr><td><svg><use href="#m-dist"/></svg></td><td>3D 거리 조정</td><td>ACAD</td></tr>
                            <tr><td><svg><use href="#m-orbit"/></svg></td><td>3D 구속된 궤도</td><td>ACAD</td></tr>
                            <tr><td><svg><use href="#m-orbit"/></svg></td><td>3D 궤도</td><td>ACAD</td></tr>
                            <tr><td><svg><use href="#m-mirror"/></svg></td><td>3D 대칭</td><td>ACAD</td></tr>
                            <tr><td><svg><use href="#m-array"/></svg></td><td>3D 배열</td><td>ACAD</td></tr>
                            <tr><td><svg><use href="#m-walk"/></svg></td><td>3D 보행시선</td><td>ACAD</td></tr>
                            <tr><td><svg><use href="#m-wset"/></svg></td><td>3D 보행시선 및 조감뷰 설정</td><td>ACAD</td></tr>
                            <tr><td><svg><use href="#m-orbit"/></svg></td><td>3D 연속 궤도</td><td>ACAD</td></tr>
                            <tr><td><svg><use href="#m-move"/></svg></td><td>3D 이동</td><td>ACAD</td></tr>
                            </tbody>
                        </table>
                        <div class="sbar"><i class="vee up"></i><i class="thumb"></i><i class="vee"></i></div>
                    </div>
                </section>
            </div>
            <section class="info">
                <div class="info-in">
                    <h3>정보<svg><use href="#d-chev"/></svg></h3>
                    <article>
                        <h1>마우스 버튼</h1>
                        <p>도구막대를 선택하여 해당 내용을 편집하고 모양<br>을 미리 보십시오. 명령을 트리 뷰로 끌어 도구막<br>대에 추가하십시오. 도구막대를 다른 도구막대로<br>끌어 플라이아웃을 작성할 수도 있으며, 도면층<br>리스트와 같은 조정을 추가하거나 제거할 수 있<br>습니다. 조정 요소를 보려면 명령 리스트에서 범<br>주 필터를 사용하십시오.</p>
                        <a href="#">마우스 버튼에 대해 알아보기</a>
                    </article>
                </div>
            </section>
        </div>
        <footer>
            <button>확인(O)</button>
            <button>취소(C)</button>
            <button disabled>적용(A)</button>
            <button>도움말(H)</button>
            <button class="less"><svg viewBox="0 0 24 24"><circle cx="12" cy="12" r="10" fill="#e9eefa" stroke="#26528c" stroke-width="2"/><path d="M14 6l-5 6 5 6" fill="none" stroke="#111" stroke-width="4"/></svg></button>
        </footer>
    </div>

    <svg class="cursor" viewBox="0 0 14 22"><path d="M1 1v16l4-4 3 7 3-1-3-7h5z" fill="#fff" stroke="#000"/></svg>

    <div class="caption">
        <b>...</b><b>Shift</b><b>+</b><span>클릭</span><span>항목</span><span>우클릭</span><span>→</span><span>새</span><span>버튼</span><span>→</span><b>...</b>
    </div>
</main>

<div class="cmdline">
    <i class="grip"></i>
    <svg viewBox="0 0 14 14"><path d="M3 3l8 8M11 3l-8 8" stroke="#b9bec6" stroke-width="2"/></svg>
    <svg class="wrench" viewBox="0 0 16 16"><path d="M2 14l8-8" stroke="#b9bec6" stroke-width="2"/><path d="M10 1a4 4 0 0 0-1 5 4 4 0 0 0 6 0l-3-1-1-2z" fill="#b9bec6"/></svg>
    <label class="cmd-field">
        <svg viewBox="0 0 16 14"><path d="M1 1h14v12H1z" fill="#eee" stroke="#999"/><path d="M1 2h14" stroke="#999" stroke-width="3"/><path d="M3 6l2 2-2 2M6 10h3" stroke="#888" fill="none"/></svg>
        <i class="caret gray"></i>
        <input type="text" placeholder="명령 입력" aria-label="명령 입력">
    </label>
</div>

<footer class="bottom">
    <nav class="layout-tabs">
        <button class="select">모형</button><button>배치1</button><button>배치2</button><button class="plus">+</button>
    </nav>
    <div class="status">
        <div class="grp"><button class="txt">모형</button><button class="on"><svg><use href="#z-grid"/></svg></button><button><svg><use href="#z-dots"/></svg></button><button class="mini"><i class="caret lg"></i></button></div>
        <div class="grp"><button><svg><use href="#z-ortho"/></svg></button><button><svg><use href="#z-polar"/></svg></button><button class="mini"><i class="caret lg"></i></button><button><svg><use href="#z-iso"/></svg></button><button class="mini"><i class="caret lg"></i></button><button><svg><use href="#z-track"/></svg></button><button class="on"><svg><use href="#z-osnap"/></svg></button><button class="mini"><i class="caret lg"></i></button></div>
        <div class="grp"><button class="on"><svg><use href="#z-anno1"/></svg></button><button><svg><use href="#z-anno2"/></svg></button><button><svg><use href="#z-anno"/></svg></button><button class="scale">1:1<i class="caret lg"></i></button></div>
        <div class="grp"><button><svg><use href="#z-gear"/></svg></button><button class="mini"><i class="caret lg"></i></button></div>
        <div class="grp"><button><svg><use href="#z-plus"/></svg></button></div>
        <div class="grp"><button><svg><use href="#z-shapes"/></svg></button></div>
        <div class="grp last"><button><svg><use href="#z-full"/></svg></button><button><svg><use href="#z-menu"/></svg></button></div>
    </div>
</footer>
</body>
</html>
```

FILE: styles.css
```css
*{
    margin: 0;
    padding: 0;
    box-sizing: border-box;
}
body{
    height: 100vh;
    display: flex;
    flex-direction: column;
    overflow: hidden;
    background: #212832;
    color: #e3e6ea;
    font: 13px/16px "Noto Sans", "Noto Sans CJK KR", sans-serif;
}
button, input, select{
    font: inherit;
    color: inherit;
    background: none;
    border: 0;
    outline: 0;
}
button{
    white-space: nowrap;
}
select{
    appearance: none;
}
li{
    list-style: none;
}
svg{
    display: block;
    flex: none;
}
.defs{
    position: absolute;
    width: 0;
    height: 0;
}
.caret{
    flex: none;
    border: 3px solid transparent;
    border-top-color: #e3e6ea;
    border-bottom: 0;
}
.caret.lg{
    border-width: 4px;
    border-bottom: 0;
}
.caret.dim{
    border-top-color: #7a828e;
}
.caret.gray{
    border-top-color: #888;
}

/* title bar */
.titlebar{
    display: flex;
    height: 43px;
    flex: none;
}
.logo{
    width: 28px;
    height: 32px;
    margin: 3px 11px 0 5px;
}
.head-main{
    flex: 1;
}
.title-row{
    height: 26px;
    display: grid;
    grid-template-columns: 663px 1fr auto 136px;
}
.quick{
    display: flex;
    height: 21px;
    align-items: center;
}
.quick button{
    width: 24px;
    display: flex;
    justify-content: center;
}
.quick .narrow{
    width: 12px;
}
.quick svg, .account svg{
    width: 18px;
    height: 18px;
}
.app-title{
    display: flex;
    gap: 16px;
    height: 24px;
    line-height: 24px;
    color: #d3d7dd;
}
.account{
    display: flex;
    align-items: center;
    height: 20px;
    gap: 5px;
}
.tri-right{
    border: 4px solid transparent;
    border-left-color: #b9bec6;
    border-right: 0;
}
.help-search{
    width: 178px;
    height: 20px;
    background: #465068;
}
.user-name{
    width: 96px;
    height: 20px;
    background: #2b323c;
}
.account .sep{
    width: 1px;
    height: 18px;
    margin: 0 4px;
    background: #4a515c;
}
.account .help{
    width: 16px;
    height: 16px;
    border-radius: 8px;
    background: #9399a1;
    color: #212832;
    font-weight: bold;
}
.win-btns{
    display: flex;
    justify-content: flex-end;
    align-items: center;
    height: 22px;
    gap: 10px;
    padding-right: 4px;
}
.win-btns svg{
    width: 14px;
    height: 14px;
}
.ribbon-tabs{
    display: flex;
    align-items: center;
    height: 17px;
    color: #b3b9c2;
}
.ribbon-tabs button{
    height: 17px;
    padding: 0 10px;
    line-height: 16px;
}
.ribbon-tabs .select{
    background: #3b4454;
    color: #fff;
}
.pill{
    width: 16px;
    height: 8px;
    margin: 0 4px 0 20px;
    background: radial-gradient(circle, #333 1px, #f2f3f4 2px);
}

/* ribbon */
.ribbon{
    display: flex;
    flex: none;
    height: 98px;
    padding-left: 1px;
    background: #3b4454;
    border-top: 1px solid #4a5466;
}
.panel{
    display: flex;
    flex-direction: column;
    border-right: 1px solid #262d39;
}
.p-draw{ width: 202px; }
.p-modify{ width: 239px; }
.p-note{ width: 169px; }
.p-layer{ width: 255px; }
.p-block{ width: 137px; }
.p-prop{ width: 244px; }
.p-group{ width: 68px; }
.p-util{ width: 103px; }
.p-clip{ width: 100px; }
.p-view{ width: 49px; }
.p-touch{
    width: 42px;
    border: 0;
}
.panel-body{
    display: flex;
    flex: 1;
    padding: 2px 0 0 1px;
}
.panel h2{
    position: relative;
    display: flex;
    justify-content: center;
    align-items: center;
    gap: 7px;
    height: 17px;
    padding-bottom: 2px;
    font-size: 13px;
    font-weight: normal;
}
.corner{
    width: 8px;
    height: 8px;
}
.p-prop .corner{
    position: absolute;
    right: 3px;
}
.p-view h2{
    gap: 5px;
}
.big{
    display: flex;
    flex-direction: column;
    align-items: center;
    padding-top: 2px;
}
.big svg{
    width: 36px;
    height: 36px;
}
.big .caret{
    margin-top: 4px;
}
.big.low svg{
    margin-bottom: 5px;
}
.w36{ width: 36px; }
.w38{ width: 38px; }
.w40{ width: 40px; }
.w44{ width: 44px; }
.w50{ width: 50px; }
.w76{ width: 76px; }
.tool{
    display: flex;
    align-items: center;
    height: 25px;
    padding-left: 2px;
}
.tool svg{
    width: 20px;
    height: 20px;
    margin-right: 4px;
}
.tool .caret{
    margin-left: 9px;
}
.p-draw .tool .caret{
    margin-left: 1px;
}
.grow{
    flex: 1;
}
.row{
    display: flex;
}
.row .tool{
    padding-left: 0;
}
.grid{
    display: grid;
    grid-template-columns: 60px 60px 86px 24px;
    grid-auto-rows: 25px;
}
.spread .caret{
    margin-left: 13px;
}
.on.tool{
    width: 24px;
    padding-left: 1px;
    background: #2b4f70;
    border: 1px solid #6bb1e8;
}
.combo{
    display: flex;
    align-items: center;
    flex: 1;
    height: 21px;
    background: #4a5469;
}
.combo .caret{
    margin-right: 2px;
}
.combo select{
    flex: 1;
    min-width: 0;
}
.layer-combo{
    flex: none;
    margin: 2px 2px 2px 0;
    padding-left: 2px;
}
.layer-combo svg{
    width: 17px;
    height: 17px;
    margin-right: 3px;
}
.swatch{
    width: 15px;
    height: 15px;
    margin-right: 5px;
    background: #fff;
}
.p-prop .panel-body{
    padding-left: 3px;
}
.prop-row{
    display: flex;
    align-items: center;
    height: 24px;
    padding: 0 3px 0 2px;
}
.prop-row:first-child{
    margin-top: 1px;
}
.prop-row svg{
    width: 18px;
    height: 18px;
    margin-right: 3px;
}
.prop-row .swatch{
    margin: 0 10px 0 11px;
}
.prop-row .line{
    width: 64px;
    height: 1px;
    margin: 0 1px 0 3px;
    background: #dfe2e6;
}

/* file tabs */
.file-tabs{
    display: flex;
    flex: none;
    align-items: flex-end;
    height: 30px;
    padding-left: 20px;
    border-bottom: 3px solid #3f4a59;
}
.file-tab{
    display: flex;
    align-items: center;
    width: 124px;
    height: 22px;
    padding: 0 11px;
    background: #2c3442;
    border-radius: 10px 10px 0 0;
    color: #b3b9c2;
}
.file-tab.select{
    justify-content: space-between;
    background: #3b4454;
    color: #e3e6ea;
}
.file-tab svg{
    width: 12px;
    height: 12px;
}
.add{
    width: 20px;
    height: 16px;
    margin: 0 0 4px 7px;
    background: #2c3442;
    border-radius: 6px 6px 6px 2px;
    color: #b3b9c2;
    font-size: 16px;
    font-weight: bold;
    line-height: 16px;
}

/* drawing area */
.canvas{
    position: relative;
    flex: 1;
    background-color: #000;
    background-image:
        linear-gradient(90deg, #262626 1px, transparent 1px),
        linear-gradient(#262626 1px, transparent 1px),
        linear-gradient(90deg, transparent 9px, #111 9px, #111 10px, transparent 10px, transparent 18px, #111 18px, #111 19px, transparent 19px, transparent 28px, #111 28px, #111 29px, transparent 29px, transparent 37px, #111 37px, #111 38px, transparent 38px),
        linear-gradient(transparent 9px, #111 9px, #111 10px, transparent 10px, transparent 18px, #111 18px, #111 19px, transparent 19px, transparent 28px, #111 28px, #111 29px, transparent 29px, transparent 37px, #111 37px, #111 38px, transparent 38px);
    background-size: 46px 46px;
    background-position: 23px 8px;
}
.axis-x{
    position: absolute;
    left: 50%;
    right: 0;
    top: 328px;
    height: 1px;
    background: #6a1d21;
}
.view-label{
    position: absolute;
    left: 2px;
    top: 4px;
    color: #dcdcdc;
}
.view-btns{
    position: absolute;
    right: 9px;
    top: 8px;
    display: flex;
    gap: 8px;
}
.view-btns svg{
    width: 12px;
    height: 12px;
}
.viewcube{
    position: absolute;
    right: 22px;
    top: 45px;
    width: 120px;
    height: 120px;
    border: 13px solid #2e2e2e;
    border-radius: 60px;
    color: #b5b5b5;
    font-size: 18px;
    line-height: 20px;
}
.viewcube span{
    position: absolute;
}
.viewcube .n{
    left: 39px;
    top: -18px;
}
.viewcube .s{
    left: 39px;
    bottom: -18px;
}
.viewcube .w{
    left: -18px;
    top: 37px;
}
.viewcube .e{
    right: -18px;
    top: 37px;
}
.cube{
    position: absolute;
    left: 21px;
    top: 21px;
    width: 52px;
    height: 52px;
    background: radial-gradient(#9c9ca6 40%, #a9a9ab 70%);
    border: 1px solid #bbb;
    color: #333;
    font-size: 13px;
}
.wcs{
    position: absolute;
    right: 61px;
    top: 192px;
    display: flex;
    align-items: center;
    gap: 7px;
    width: 45px;
    height: 17px;
    padding-left: 3px;
    background: #8a8a92;
    border: 1px solid #a3a3aa;
    border-radius: 4px;
    color: #3c3c40;
    font-size: 11px;
}
.navbar{
    position: absolute;
    right: 2px;
    top: 233px;
    width: 33px;
    height: 207px;
    background: #555;
    border-radius: 3px;
}
.navbar svg{
    width: 32px;
    height: 206px;
}

/* dialog window */
.dialog{
    position: absolute;
    left: 585px;
    top: 10px;
    width: 718px;
    display: flex;
    flex-direction: column;
    background: #f0f0f0;
    border: 1px solid #fff;
    border-top: 0;
    color: #222;
    font-family: "Liberation Sans", "Noto Sans CJK KR", sans-serif;
}
.dlg-title{
    display: flex;
    align-items: center;
    height: 31px;
    margin: 0 -1px;
    padding: 0 2px 2px 9px;
    background: #729fff;
    color: #10131a;
}
.dlg-title span{
    flex: 1;
}
.dlg-logo{
    width: 16px;
    height: 16px;
    margin-right: 5px;
    background: #fff;
    color: #c01d25;
    font: bold 15px/16px "Liberation Sans", sans-serif;
    text-align: center;
}
.dlg-title button{
    display: flex;
    justify-content: center;
    width: 46px;
}
.dlg-title svg{
    width: 14px;
    height: 14px;
}
.dlg-tabs{
    display: flex;
    height: 21px;
    padding: 3px 0 0 1px;
    border-bottom: 1px solid #e0e0e0;
}
.dlg-tabs button{
    width: 45px;
    padding-right: 14px;
    border-right: 1px solid #ddd;
    line-height: 18px;
}
.dlg-tabs .select{
    width: 60px;
    padding: 0;
    background: #fff;
}
.dlg-body{
    display: flex;
    justify-content: space-between;
    height: 645px;
    padding: 4px 9px 0 6px;
    border-bottom: 1px solid #dcdcdc;
}
.left{
    display: flex;
    flex-direction: column;
    justify-content: space-between;
    width: 342px;
    height: 639px;
}
.box{
    display: flex;
    flex-direction: column;
    border: 2px solid #a6a9ad;
}
.files{
    height: 317px;
}
.cmds{
    height: 312px;
}
.dialog h3{
    display: flex;
    justify-content: space-between;
    flex: none;
    height: 22px;
    padding: 0 2px 0 5px;
    background: linear-gradient(#fff, #eff1f2);
    border-bottom: 1px solid #9a9ea3;
    color: #111;
    font-size: 14px;
    line-height: 17px;
}
.dialog h3 svg{
    width: 12px;
    height: 12px;
    margin-top: 6px;
}
.bar{
    display: flex;
    align-items: center;
    flex: none;
    height: 22px;
}
.bar svg{
    width: 18px;
    height: 18px;
    margin-left: 4px;
}
.drop{
    display: flex;
    align-items: center;
    width: 263px;
    height: 21px;
    background: #e1e1e1;
    border: 1px solid #adadad;
}
.drop select{
    flex: 1;
    padding: 0 0 4px 2px;
}
.vee{
    width: 6px;
    height: 6px;
    margin: 0 5px 3px;
    border: solid #555;
    border-width: 0 1px 1px 0;
    transform: rotate(45deg);
}
.scroller{
    display: flex;
    flex: 1;
    min-height: 0;
    overflow: hidden;
    background: #fff;
    border-top: 1px solid #82878d;
}
.tree{
    flex: 1;
    padding-left: 21px;
}
.tree li{
    position: relative;
    display: flex;
    align-items: center;
    height: 16px;
}
.tree li i{
    display: flex;
    align-items: center;
    width: 19px;
    height: 16px;
}
.tree .v{
    background: repeating-linear-gradient(#aaa 0 1px, transparent 1px 2px) 8px 0 / 1px 16px no-repeat;
}
.tree .h{
    background: repeating-linear-gradient(90deg, #aaa 0 1px, transparent 1px 2px) 8px 8px / 10px 1px no-repeat;
}
.tree .v.h{
    background: repeating-linear-gradient(#aaa 0 1px, transparent 1px 2px) 8px 0 / 1px 16px no-repeat, repeating-linear-gradient(90deg, #aaa 0 1px, transparent 1px 2px) 8px 8px / 10px 1px no-repeat;
}
.tree b{
    width: 9px;
    height: 9px;
    margin-left: 4px;
    border: 1px solid #999;
    background: linear-gradient(#333, #333) 1px 3px / 5px 1px no-repeat, #fff;
}
.tree b.plus{
    background: linear-gradient(#333, #333) 1px 3px / 5px 1px no-repeat, linear-gradient(#333, #333) 3px 1px / 1px 5px no-repeat, #fff;
}
.tree svg{
    width: 16px;
    height: 16px;
    margin-right: 2px;
}
.tree span{
    padding: 0 2px;
    white-space: nowrap;
}
.tree .select span{
    background: #0078d7;
    color: #fff;
}
.mark{
    position: absolute;
    left: 16px;
    top: -7px;
    width: 110px;
    height: 29px;
    border: 5px solid #ed1c24;
}
.sbar{
    display: flex;
    flex-direction: column;
    align-items: center;
    width: 17px;
    background: #f0f0f0;
}
.sbar .vee{
    margin: auto 0 7px;
}
.sbar .up{
    margin: 8px 0 5px;
    transform: rotate(225deg);
}
.thumb{
    width: 15px;
    height: 17px;
    background: #cdcdcd;
}
.thumb.tall{
    height: 163px;
    margin-top: 68px;
}
.find{
    display: flex;
    align-items: center;
    gap: 7px;
    margin-top: 6px;
}
.find input{
    width: 308px;
    height: 19px;
    padding-left: 3px;
    background: #fff;
    border: 1px solid #7d93a6;
    font-size: 12px;
}
.find input::placeholder{
    color: #bbb;
    font-style: italic;
}
.find svg{
    width: 18px;
    height: 18px;
}
.filter{
    display: flex;
    align-items: center;
    margin: 10px 0 8px;
}
.filter .drop{
    width: 272px;
}
.filter svg{
    width: 18px;
    height: 18px;
    margin-left: 8px;
}
.filter svg + svg{
    margin-left: 4px;
}
.cmds table{
    flex: 1;
    align-self: flex-start;
    table-layout: fixed;
    border-collapse: collapse;
}
.cmds th{
    height: 19px;
    padding-left: 5px;
    border-right: 1px solid #eee;
    font-weight: normal;
    text-align: left;
}
.cmds th:first-child{
    width: 21px;
}
.cmds th:nth-child(3){
    width: 57px;
}
.cmds th:last-child{
    width: 18px;
}
.cmds td{
    height: 17px;
    padding-left: 5px;
    line-height: 17px;
    white-space: nowrap;
}
.cmds td:first-child{
    padding-left: 4px;
}
.cmds td svg{
    width: 16px;
    height: 16px;
    background: #2e3238;
}
.info{
    width: 337px;
    height: 639px;
    padding: 2px;
    border: 1px solid #8f949a;
}
.info-in{
    height: 100%;
    border: 2px solid #9a9fa6;
}
.dialog .info h3{
    padding-left: 7px;
}
.info article{
    padding: 32px 17px;
}
.info h1{
    margin-bottom: 17px;
    color: #111;
    font-size: 22px;
    line-height: 30px;
    font-weight: bold;
}
.info p{
    margin-bottom: 9px;
    font-size: 15px;
    line-height: 18px;
    white-space: nowrap;
}
.info a{
    color: #2a1fd0;
}
.dialog footer{
    display: flex;
    justify-content: flex-end;
    align-items: flex-start;
    gap: 4px;
    height: 42px;
    padding: 7px 12px 0 0;
}
.dialog footer button{
    min-width: 59px;
    height: 22px;
    padding: 0 7px;
    background: #e6e6e6;
    border: 1px solid #b3b3b3;
}
.dialog footer button:disabled{
    background: #ccc;
    border-color: #bbb;
    color: #999;
}
.dialog footer .less{
    min-width: 0;
    margin-left: 3px;
    padding: 0;
    background: none;
    border: 0;
}
.less svg{
    width: 24px;
    height: 24px;
}
.cursor{
    position: absolute;
    left: 792px;
    top: 279px;
    width: 14px;
    height: 22px;
}
.caption{
    position: absolute;
    left: 0;
    right: 0;
    bottom: 0;
    display: flex;
    justify-content: center;
    align-items: baseline;
    gap: 24px;
    height: 71px;
    color: #fff;
    font: 300 68px/68px "Noto Sans CJK KR", sans-serif;
    text-shadow: 0 0 2px #999;
}
.caption span{
    margin: 0 4px;
}
.caption b{
    font: bold 64px/68px "DejaVu Sans", sans-serif;
}

/* command line */
.cmdline{
    display: flex;
    flex: none;
    align-items: center;
    height: 34px;
    border-top: 3px solid #3e4b57;
    border-bottom: 1px solid #454b54;
    background: #2c3442;
}
.grip{
    width: 5px;
    height: 18px;
    margin: 0 4px 0 3px;
    background: radial-gradient(circle at 1px 1px, #b9bec6 1px, transparent 1px) 0 0 / 3px 3px;
}
.cmdline svg{
    width: 14px;
    height: 14px;
    margin-right: 8px;
}
.cmdline .wrench{
    width: 17px;
    height: 17px;
    margin-right: 4px;
}
.cmd-field{
    display: flex;
    flex: 1;
    align-items: center;
    height: 30px;
    padding-left: 4px;
    background: #fff;
    color: #333;
}
.cmd-field svg{
    width: 16px;
    margin-right: 3px;
}
.cmd-field input{
    flex: 1;
    padding-left: 8px;
    font-size: 15px;
}
.cmd-field input::placeholder{
    color: #777;
    font-style: italic;
}

/* bottom */
.bottom{
    display: flex;
    flex: none;
    justify-content: space-between;
    height: 49px;
}
.layout-tabs{
    display: flex;
    gap: 3px;
    height: 20px;
    padding-left: 9px;
    color: #b3b9c2;
}
.layout-tabs button{
    width: 50px;
    background: #2c3442;
    border-radius: 0 0 8px 8px;
    line-height: 18px;
}
.layout-tabs .select{
    background: #3b4454;
    color: #fff;
    font-weight: bold;
}
.layout-tabs .plus{
    width: 20px;
    margin-left: 3px;
    font-size: 16px;
    font-weight: bold;
}
.status{
    display: flex;
    gap: 3px;
    align-self: flex-end;
    height: 26px;
}
.grp{
    display: flex;
    align-items: center;
    height: 24px;
    background: #363f4f;
}
.grp button{
    display: flex;
    justify-content: center;
    align-items: center;
    width: 24px;
    height: 24px;
}
.grp .on{
    background: #5b96d6;
}
.grp .mini{
    width: 16px;
}
.grp .txt{
    width: 28px;
    font-weight: bold;
}
.grp .scale{
    width: 33px;
    gap: 4px;
}
.grp svg{
    width: 18px;
    height: 18px;
}
.last{
    margin-left: 5px;
}
```
